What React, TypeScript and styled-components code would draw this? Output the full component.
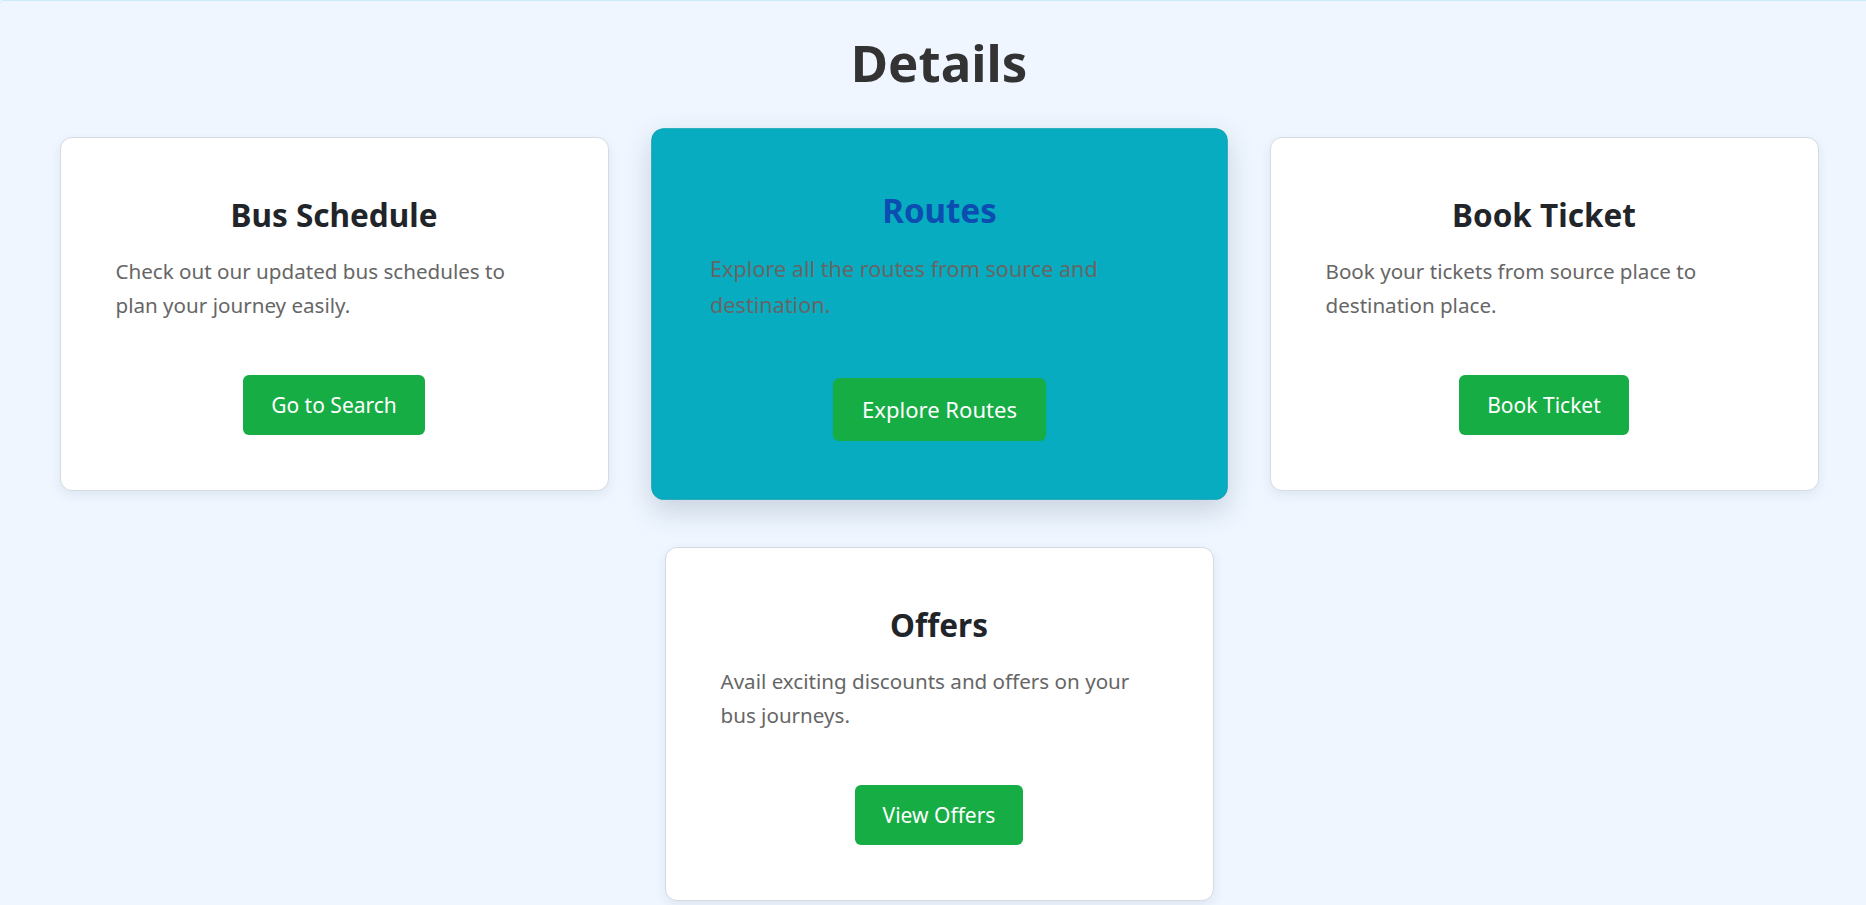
import React from "react";
import styled, { createGlobalStyle, css } from "styled-components";

const Global = createGlobalStyle`
  html, body { margin: 0; padding: 0; }
  body {
    background: #eff6ff;
    font-family: "Noto Sans", "Open Sans", sans-serif;
  }
`;

const Page = styled.section`
  min-height: 905px;
  box-sizing: border-box;
  border-top: 1px solid #c9ebf6;
  border-top-left-radius: 4px;
  padding: 0 0 40px 12px;
`;

const Heading = styled.h1`
  margin: 31px 0 44px;
  text-align: center;
  font-size: 51px;
  line-height: 1.2;
  font-weight: 700;
  color: #333333;
`;

const Grid = styled.div`
  display: flex;
  flex-wrap: wrap;
  justify-content: center;
  gap: 56px;
  width: 1759px;
  margin: 0 auto;
`;

const Card = styled.div<{ $active?: boolean }>`
  flex: 0 0 549px;
  box-sizing: border-box;
  padding: 58px 55px 55px;
  background: #ffffff;
  border: 1px solid #d6dbe1;
  border-radius: 12px;
  box-shadow: 0 4px 12px rgba(15, 40, 80, 0.08);
  display: flex;
  flex-direction: column;
  align-items: center;
  ${(p) =>
    p.$active &&
    css`
      background: #08acc0;
      border-color: #07a0b3;
      transform: scale(1.05);
      box-shadow: 0 10px 26px rgba(20, 50, 80, 0.18);
    `}
`;

const Title = styled.h3<{ $active?: boolean }>`
  margin: 0 0 20px;
  font-size: 31.5px;
  line-height: 1.2;
  font-weight: 700;
  color: ${(p) => (p.$active ? "#0b4db0" : "#212529")};
  text-align: center;
`;

const Desc = styled.p`
  align-self: stretch;
  margin: 0 0 52px;
  padding-right: 14px;
  font-size: 20.6px;
  line-height: 34.5px;
  color: #666666;
  text-align: left;
`;

const ActionButton = styled.button`
  border: none;
  border-radius: 6px;
  background: #16ad44;
  color: #ffffff;
  font-family: inherit;
  font-size: 21px;
  line-height: 30px;
  padding: 15px 28px;
  cursor: pointer;
`;

const cards = [
  {
    title: "Bus Schedule",
    desc: "Check out our updated bus schedules to plan your journey easily.",
    action: "Go to Search",
  },
  {
    title: "Routes",
    desc: "Explore all the routes from source and destination.",
    action: "Explore Routes",
    active: true,
  },
  {
    title: "Book Ticket",
    desc: "Book your tickets from source place to destination place.",
    action: "Book Ticket",
  },
  {
    title: "Offers",
    desc: "Avail exciting discounts and offers on your bus journeys.",
    action: "View Offers",
  },
];

export default function App() {
  return (
    <>
      <Global />
      <Page>
        <Heading>Details</Heading>
        <Grid>
          {cards.map((c) => (
            <Card key={c.title} $active={c.active}>
              <Title $active={c.active}>{c.title}</Title>
              <Desc>{c.desc}</Desc>
              <ActionButton>{c.action}</ActionButton>
            </Card>
          ))}
        </Grid>
      </Page>
    </>
  );
}
